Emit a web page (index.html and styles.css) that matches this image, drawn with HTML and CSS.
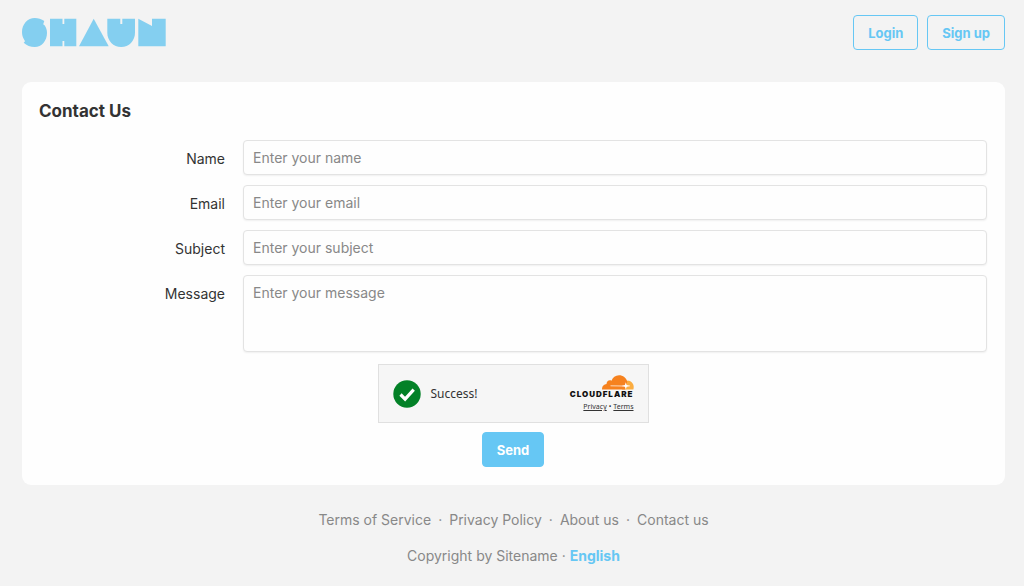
FILE: index.html
```html
<!DOCTYPE html>
<html lang="en">
<head>
    <meta charset="UTF-8">
    <meta name="viewport" content="width=device-width, initial-scale=1.0">
    <title>Contact Us</title>
    <link rel="stylesheet" href="styles.css">
</head>
<body>
    <header class="header">
        <a class="logo" href="#" aria-label="Shaun">
            <svg width="144" height="29" viewBox="0 0 144 29" fill="#84cff0">
                <path d="M22.300 3C19.500 1 16 0 12.700 0 5.700 0 0 6.200 0 14c0 3 .8 5.600 2.200 7.800l.8 1.500-1.300 1.400C4.500 27.400 8.500 29 12.700 29 19.700 29 25 22.800 25 15c0-2.800-.8-5.300-2.200-7.400l-1.600-1.300z"/>
                <path d="M28 .7h12.500V6h1.800V.7h12v27.600h-12V23h-1.800v5.300H28z"/>
                <path d="M71.700.7l15 27.600H57z"/>
                <path d="M85.300.7h13V6h2V.7H113v14c0 8-6 14.300-13.800 14.300S85.300 22.700 85.300 14.700z"/>
                <path d="M116.300.7L130 8V.7h13.700v27.600h-27.400z"/>
            </svg>
        </a>
        <nav class="header-actions">
            <button type="button" class="btn btn-outline">Login</button>
            <button type="button" class="btn btn-outline">Sign up</button>
        </nav>
    </header>

    <main class="card">
        <h1 class="card-title">Contact Us</h1>
        <form class="contact-form">
            <div class="form-row">
                <label for="name">Name</label>
                <input class="field" type="text" id="name" placeholder="Enter your name">
            </div>
            <div class="form-row">
                <label for="email">Email</label>
                <input class="field" type="email" id="email" placeholder="Enter your email">
            </div>
            <div class="form-row">
                <label for="subject">Subject</label>
                <input class="field" type="text" id="subject" placeholder="Enter your subject">
            </div>
            <div class="form-row">
                <label for="message">Message</label>
                <textarea class="field field-area" id="message" placeholder="Enter your message"></textarea>
            </div>

            <div class="form-footer">
                <div class="captcha">
                    <div class="captcha-status">
                        <svg width="28" height="28" viewBox="0 0 28 28">
                            <circle cx="14" cy="14" r="13.700" fill="#038127"/>
                            <path d="M7.500 14.500l4.600 4.600 8.600-9.400" fill="none" stroke="#fff" stroke-width="3.200"/>
                        </svg>
                        <span>Success!</span>
                    </div>
                    <div class="captcha-brand">
                        <svg width="32" height="15" viewBox="0 0 32 15">
                            <path d="M25.500 5.500c3.500.2 6.200 3 6.200 6.500 0 1-.1 1.800-.4 2.600H20z" fill="#fbad41"/>
                            <path d="M0 14.600c-.2-3 1.700-5.300 4.500-5.500.1-3 2.500-4.500 5-3.400C10.700 2.300 13.400.2 17 .2c4 0 7.300 2.600 8.300 6.400-.7 2.600-1.300 5.300-2.100 8z" fill="#f6821f"/>
                            <path d="M8.500 10.800l12.600.2M20.600 10.900H28" fill="none" stroke="#fff" stroke-width=".7"/>
                            <path d="M23.800 7.200l.9 2.800 2.800.9-2.800.9-.9 2.700-.9-2.700-2.800-.9 2.800-.9z" fill="#fff"/>
                        </svg>
                        <span class="captcha-name">CLOUDFLARE</span>
                        <span class="captcha-links"><a href="#">Privacy</a><span>•</span><a href="#">Terms</a></span>
                    </div>
                </div>
                <button type="submit" class="btn btn-primary">Send</button>
            </div>
        </form>
    </main>

    <footer class="footer">
        <nav class="footer-links">
            <a href="#">Terms of Service</a>
            <span>·</span>
            <a href="#">Privacy Policy</a>
            <span>·</span>
            <a href="#">About us</a>
            <span>·</span>
            <a href="#">Contact us</a>
        </nav>
        <p>Copyright by Sitename · <a class="language" href="#">English</a></p>
    </footer>
</body>
</html>
```
FILE: styles.css
```css
* {
    margin: 0;
    padding: 0;
    box-sizing: border-box;
}

body {
    font-family: Inter, sans-serif;
    font-size: 14px;
    line-height: 18px;
    color: #333;
    background: #f3f3f3;
    padding: 15px 19px 20px 22px;
}

a {
    color: inherit;
    text-decoration: none;
}

.header {
    display: flex;
    justify-content: space-between;
    align-items: center;
    margin-bottom: 32px;
}

.logo svg {
    display: block;
}

.header-actions {
    display: flex;
    gap: 9px;
}

.btn {
    height: 35px;
    padding: 0 14px;
    border: 1px solid #66c7f4;
    border-radius: 4px;
    font-family: inherit;
    font-size: 13px;
    font-weight: 700;
    cursor: pointer;
}

.btn-outline {
    background: transparent;
    color: #66c7f4;
}

.btn-primary {
    background: #66c7f4;
    color: white;
}

.card {
    background: #fefefe;
    border-radius: 9px;
    padding: 18px 18px 18px 17px;
}

.card-title {
    font-size: 17px;
    line-height: 22px;
    font-weight: 700;
    margin-bottom: 18px;
}

.contact-form {
    display: flex;
    flex-direction: column;
    gap: 10px;
}

.form-row {
    display: grid;
    grid-template-columns: 1fr 4fr;
    gap: 18px;
}

.form-row label {
    padding-top: 10px;
    text-align: right;
}

.field {
    width: 100%;
    height: 35px;
    padding: 8px 9px;
    border: 1px solid #e3e3e3;
    border-radius: 4px;
    box-shadow: 0 1px 2px rgba(0, 0, 0, 0.06);
    background: #fefefe;
    font: inherit;
    color: inherit;
}

.field::placeholder {
    color: #888;
}

.field-area {
    display: block;
    height: 77px;
    resize: none;
}

.form-footer {
    display: flex;
    flex-direction: column;
    align-items: center;
    gap: 9px;
    padding-top: 2px;
}

.captcha {
    display: flex;
    justify-content: space-between;
    align-items: center;
    width: 271px;
    height: 59px;
    padding: 0 14px;
    border: 1px solid #e0e0e0;
    background: #f6f6f6;
}

.captcha-status {
    display: flex;
    align-items: center;
    gap: 10px;
    font-family: "Noto Sans", sans-serif;
    font-size: 12px;
}

.captcha-brand {
    display: flex;
    flex-direction: column;
    align-items: flex-end;
    padding-top: 2px;
}

.captcha-name {
    font-size: 8px;
    line-height: 9px;
    font-weight: 900;
    letter-spacing: 1px;
    color: #111;
}

.captcha-links {
    display: flex;
    gap: 2px;
    font-family: "Noto Sans", sans-serif;
    font-size: 7px;
    line-height: 15px;
}

.captcha-links a {
    text-decoration: underline;
}

.footer {
    display: flex;
    flex-direction: column;
    align-items: center;
    gap: 18px;
    padding-top: 26px;
    color: #888;
}

.footer-links {
    display: flex;
    gap: 7px;
}

.language {
    font-weight: 700;
    color: #66c7f4;
}
```
